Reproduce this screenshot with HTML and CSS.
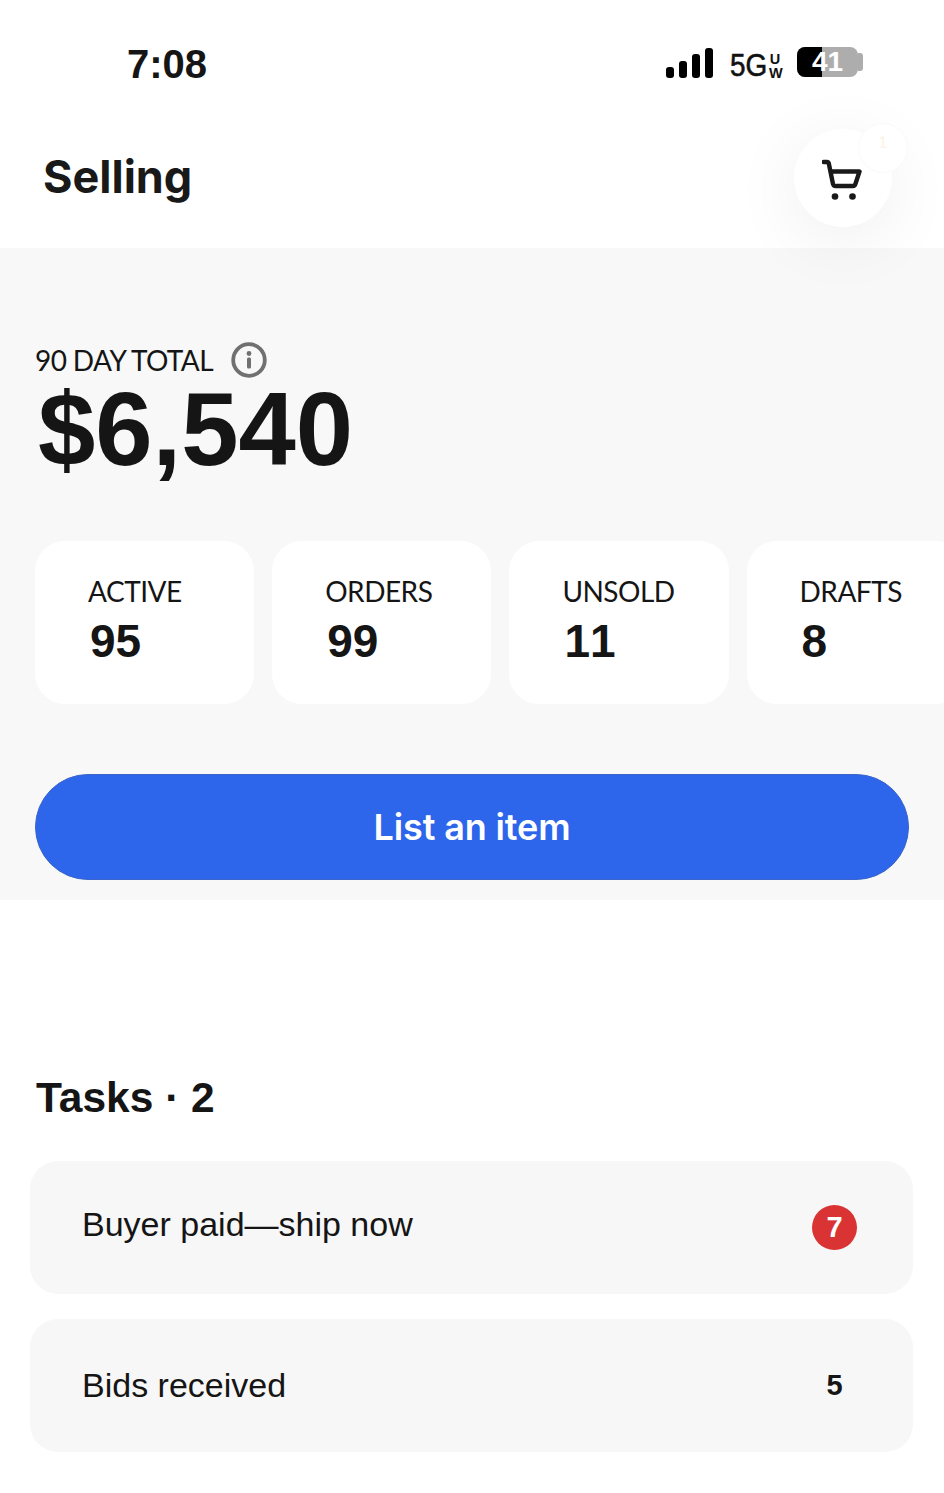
FILE: index.html
```html
<!DOCTYPE html>
<html lang="en">
  <head>
    <meta charset="UTF-8">
    <meta name="viewport" content="width=device-width, initial-scale=1.0">
    <title>Selling</title>
    <link rel="stylesheet" href="styles.css">
  </head>
  <body>
    <header class="status-bar">
        <span class="clock">7:08</span>
        <div class="status-icons">
            <div class="signal">
                <span class="bar bar1"></span>
                <span class="bar bar2"></span>
                <span class="bar bar3"></span>
                <span class="bar bar4"></span>
            </div>
            <div class="network">
                <span class="network-5g">5G</span>
                <span class="network-uw">U<br>W</span>
            </div>
            <div class="battery">
                <div class="battery-body">
                    <span class="battery-level"></span>
                    <span class="battery-text">41</span>
                </div>
                <span class="battery-tip"></span>
            </div>
        </div>
    </header>

    <div class="title-bar">
        <h1>Selling</h1>
        <div class="cart-wrap">
            <button class="cart-button" aria-label="Cart">
                <svg width="42" height="44" viewBox="0 0 42 44" fill="none">
                    <path d="M1.500 6H5c1 0 1.500.5 1.800 1.500L11 28c.4 1.500 1.300 2 2.500 2H31c1.300 0 2-.7 2.300-1.800L37.500 15.500H8.500" stroke="#191919" stroke-width="4.400" stroke-linecap="round" stroke-linejoin="round"/>
                    <circle cx="13" cy="40.500" r="3.300" fill="#191919"/>
                    <circle cx="30.500" cy="40.500" r="3.300" fill="#191919"/>
                </svg>
            </button>
            <span class="cart-bubble">1</span>
        </div>
    </div>

    <section class="summary">
        <div class="total-label">
            <span>90 DAY TOTAL</span>
            <svg width="36" height="36" viewBox="0 0 36 36" fill="none">
                <circle cx="18" cy="18" r="15.800" stroke="#707070" stroke-width="3.800"/>
                <circle cx="18" cy="11.500" r="2.400" fill="#707070"/>
                <rect x="16" y="15.500" width="4" height="11" rx="1.500" fill="#707070"/>
            </svg>
        </div>
        <div class="total-value">$6,540</div>

        <div class="stats">
            <div class="stat">
                <span class="stat-label">ACTIVE</span>
                <span class="stat-value">95</span>
            </div>
            <div class="stat">
                <span class="stat-label">ORDERS</span>
                <span class="stat-value">99</span>
            </div>
            <div class="stat">
                <span class="stat-label">UNSOLD</span>
                <span class="stat-value">11</span>
            </div>
            <div class="stat">
                <span class="stat-label">DRAFTS</span>
                <span class="stat-value">8</span>
            </div>
        </div>

        <button class="list-button">List an item</button>
    </section>

    <section class="tasks">
        <h2>Tasks · 2</h2>
        <div class="task task-urgent">
            <span>Buyer paid—ship now</span>
            <span class="task-badge">7</span>
        </div>
        <div class="task">
            <span>Bids received</span>
            <span class="task-count">5</span>
        </div>
    </section>
  </body>
</html>
```

FILE: styles.css
```css
html, body {
    margin: 0;
    height: 1493px;
    overflow: hidden;
    background-color: #fff;
}
body {
    font-family: "Liberation Sans", Arial, sans-serif;
    font-kerning: none;
    color: #151515;
}
.status-bar {
    height: 120px;
    padding: 40px 81px 0 127px;
    box-sizing: border-box;
    display: flex;
    justify-content: space-between;
    align-items: flex-start;
}
.clock {
    font-size: 40px;
    font-weight: bold;
    line-height: 48px;
}
.status-icons {
    display: flex;
    align-items: flex-start;
    margin-top: 7px;
}
.signal {
    display: flex;
    align-items: flex-end;
    gap: 5px;
    height: 31px;
}
.bar {
    width: 8px;
    background-color: #000;
    border-radius: 3px;
}
.bar1 { height: 11px; }
.bar2 { height: 17px; }
.bar3 { height: 24px; }
.bar4 { height: 30px; }
.network {
    display: flex;
    margin-left: 17px;
    color: #111;
}
.network-5g {
    font-size: 31px;
    line-height: 38px;
    -webkit-text-stroke: 0.6px #111;
    transform: scaleX(0.9);
    transform-origin: left;
    width: 39px;
}
.network-uw {
    width: 12px;
    font-size: 14.500px;
    font-weight: bold;
    line-height: 14px;
    margin-top: 5px;
    text-align: center;
}
.battery {
    display: flex;
    align-items: center;
    margin-left: 16px;
}
.battery-body {
    position: relative;
    width: 61px;
    height: 30px;
    background-color: #adadad;
    border-radius: 8px;
    overflow: hidden;
}
.battery-level {
    display: block;
    width: 25px;
    height: 100%;
    background-color: #000;
}
.battery-text {
    position: absolute;
    left: 0;
    right: 0;
    top: 0;
    text-align: center;
    color: #fff;
    font-size: 28px;
    font-weight: bold;
    line-height: 30px;
}
.battery-tip {
    width: 5px;
    height: 18px;
    background-color: #adadad;
    border-radius: 0 3px 3px 0;
}
.title-bar {
    height: 128px;
    padding: 0 52px 0 43px;
    display: flex;
    justify-content: space-between;
    align-items: center;
    box-sizing: border-box;
    position: relative;
    z-index: 1;
}
h1 {
    margin: -15px 0 0 0;
    font-family: Inter, sans-serif;
    font-size: 45px;
    font-weight: 700;
    color: #191919;
}
.cart-wrap {
    position: relative;
    margin-top: -12px;
}
.cart-button {
    width: 98px;
    height: 98px;
    border: none;
    padding: 0;
    border-radius: 50%;
    background-color: #fff;
    box-shadow: 0 12px 70px rgba(0, 0, 0, 0.07);
    display: flex;
    align-items: center;
    justify-content: center;
}
.cart-bubble {
    position: absolute;
    top: -6px;
    right: -16px;
    width: 50px;
    height: 50px;
    box-sizing: border-box;
    border: 1px solid #fafaf7;
    border-radius: 50%;
    background-color: #fff;
    color: #fdf3e6;
    font-size: 16px;
    line-height: 38px;
    text-align: center;
}
.summary {
    height: 652px;
    box-sizing: border-box;
    background-color: #f8f8f8;
    padding: 94px 0 0 35px;
    overflow: hidden;
}
.total-label {
    display: flex;
    align-items: center;
    gap: 18px;
    font-family: Lato, sans-serif;
    font-kerning: normal;
    font-size: 28px;
    height: 36px;
    letter-spacing: -0.6px;
}
.total-value {
    font-size: 103px;
    font-weight: bold;
    line-height: 100px;
    margin-left: 3px;
    margin-top: 2px;
}
.stats {
    display: flex;
    gap: 18px;
    margin-top: 61px;
}
.stat {
    flex: 0 0 auto;
    width: 219.200px;
    height: 163px;
    box-sizing: border-box;
    padding: 32px 0 0 53px;
    background-color: #fff;
    border-radius: 30px;
    display: flex;
    flex-direction: column;
}
.stat-label {
    font-family: Lato, sans-serif;
    font-kerning: normal;
    font-size: 28px;
    line-height: 36px;
    letter-spacing: -0.5px;
}
.stat-value {
    font-size: 46px;
    font-weight: bold;
    line-height: 54px;
    margin-left: 2px;
    margin-top: 5px;
}
.list-button {
    display: block;
    width: 874px;
    height: 106px;
    margin-top: 70px;
    border: 1px solid #3a64c9;
    border-radius: 53px;
    background-color: #2d65eb;
    color: #fff;
    font-family: Inter, sans-serif;
    font-size: 36px;
    font-weight: 600;
    letter-spacing: -0.15px;
}
.tasks {
    padding: 170px 31px 0 30px;
}
h2 {
    margin: 0 0 35px 6px;
    font-kerning: normal;
    font-size: 42.500px;
    font-weight: bold;
    line-height: 56px;
}
.task {
    height: 133px;
    box-sizing: border-box;
    margin-bottom: 25px;
    padding: 0 56px 0 52px;
    background-color: #f7f7f7;
    border-radius: 28px;
    display: flex;
    justify-content: space-between;
    align-items: center;
    font-size: 34px;
}
.task-urgent {
    padding-bottom: 6px;
}
.task-badge {
    width: 45px;
    height: 45px;
    margin-top: 6px;
    border-radius: 50%;
    background-color: #d93333;
    color: #fff;
    font-size: 29px;
    font-weight: bold;
    line-height: 45px;
    text-align: center;
}
.task-count {
    width: 45px;
    font-size: 29px;
    font-weight: bold;
    text-align: center;
}
```
